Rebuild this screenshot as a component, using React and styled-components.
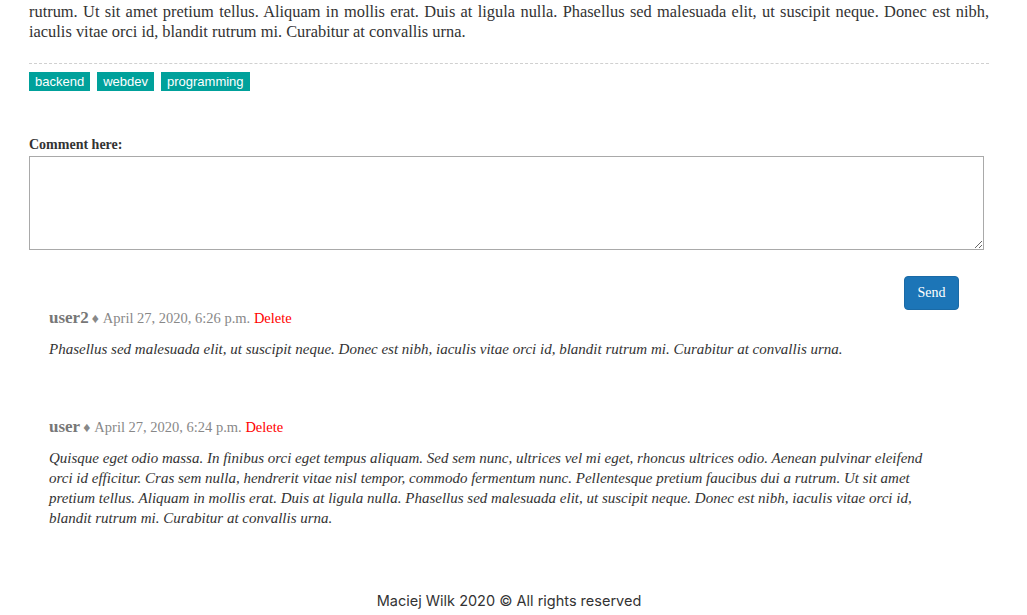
import React from 'react';
import styled, { createGlobalStyle } from 'styled-components';

const Global = createGlobalStyle`
	body {
		margin: 0;
		background: #fff;
		font-family: "Liberation Serif", "DejaVu Serif", serif;
		color: #333;
	}
`

const Page = styled.div`
	padding: 0 38px 0 29px;
	min-height: 615px;
	box-sizing: border-box;
	display: flex;
	flex-direction: column;
`

const Body = styled.p`
	margin: 0;
	padding-top: 2px;
	font-size: 16.4px;
	line-height: 20px;
	text-align: justify;
	color: #333;
`

const Tags = styled.div`
	margin-top: 21px;
	padding-top: 8px;
	border-top: 1px dashed #d0d0d0;
	display: flex;
	gap: 7px;
`

const Tag = styled.a`
	background: #00a19b;
	color: #fff;
	font-family: "Liberation Sans", Arial, sans-serif;
	font-size: 13px;
	line-height: 19px;
	padding: 0 6px;
	text-decoration: none;
`

const CommentForm = styled.form`
	margin-top: 46px;
	display: flex;
	flex-direction: column;
`

const Label = styled.label`
	font-size: 14px;
	font-weight: 700;
	color: #333;
	margin-bottom: 3px;
`

const TextArea = styled.textarea`
	box-sizing: border-box;
	width: 955px;
	height: 94px;
	border: 1px solid #a9a9a9;
	resize: both;
`

const Send = styled.button`
	align-self: flex-end;
	margin: 26px 30px 0 0;
	width: 55px;
	height: 34px;
	background: #1c75b7;
	border: 1px solid #1a6aa6;
	border-radius: 4px;
	color: #fff;
	font-family: "Liberation Serif", serif;
	font-size: 14px;
`

const Comments = styled.div`
	padding: 0 60px 0 20px;
	display: flex;
	flex-direction: column;
	gap: 60px;
`

const Comment = styled.div``

const Head = styled.div`
	font-size: 14.5px;
	color: #888;
	line-height: 16px;
`

const User = styled.strong`
	font-size: 17px;
	color: #777;
	margin-right: 3px;
`

const Diamond = styled.span`
	font-size: 14px;
	margin-right: 4px;
`

const Del = styled.a`
	color: #f00;
`

const Text = styled.p`
	margin: 12px 0 0;
	font-style: italic;
	font-size: 15px;
	line-height: 20px;
	color: #333;
`

const Footer = styled.footer`
	margin-top: auto;
	padding-bottom: 6px;
	text-align: center;
	font-family: Inter, "Liberation Sans", sans-serif;
	font-size: 14.5px;
	color: #333;
`

const comments = [
	{
		user: 'user2',
		date: 'April 27, 2020, 6:26 p.m.',
		text: 'Phasellus sed malesuada elit, ut suscipit neque. Donec est nibh, iaculis vitae orci id, blandit rutrum mi. Curabitur at convallis urna.',
	},
	{
		user: 'user',
		date: 'April 27, 2020, 6:24 p.m.',
		text: 'Quisque eget odio massa. In finibus orci eget tempus aliquam. Sed sem nunc, ultrices vel mi eget, rhoncus ultrices odio. Aenean pulvinar eleifend orci id efficitur. Cras sem nulla, hendrerit vitae nisl tempor, commodo fermentum nunc. Pellentesque pretium faucibus dui a rutrum. Ut sit amet pretium tellus. Aliquam in mollis erat. Duis at ligula nulla. Phasellus sed malesuada elit, ut suscipit neque. Donec est nibh, iaculis vitae orci id, blandit rutrum mi. Curabitur at convallis urna.',
	},
]

export default function App() {
	return (
		<Page>
			<Global />
			<Body>
				rutrum. Ut sit amet pretium tellus. Aliquam in mollis erat. Duis at ligula nulla. Phasellus sed malesuada elit, ut suscipit neque. Donec est nibh, iaculis vitae orci id, blandit rutrum mi. Curabitur at convallis urna.
			</Body>
			<Tags>
				{['backend', 'webdev', 'programming'].map(t => <Tag key={t} href="#">{t}</Tag>)}
			</Tags>
			<CommentForm onSubmit={e => e.preventDefault()}>
				<Label htmlFor="comment">Comment here:</Label>
				<TextArea id="comment" />
				<Send type="submit">Send</Send>
			</CommentForm>
			<Comments>
				{comments.map((c, i) => (
					<Comment key={i}>
						<Head>
							<User>{c.user}</User><Diamond>&#9830;</Diamond>{c.date} <Del>Delete</Del>
						</Head>
						<Text>{c.text}</Text>
					</Comment>
				))}
			</Comments>
			<Footer>Maciej Wilk 2020 © All rights reserved</Footer>
		</Page>
	);
}
